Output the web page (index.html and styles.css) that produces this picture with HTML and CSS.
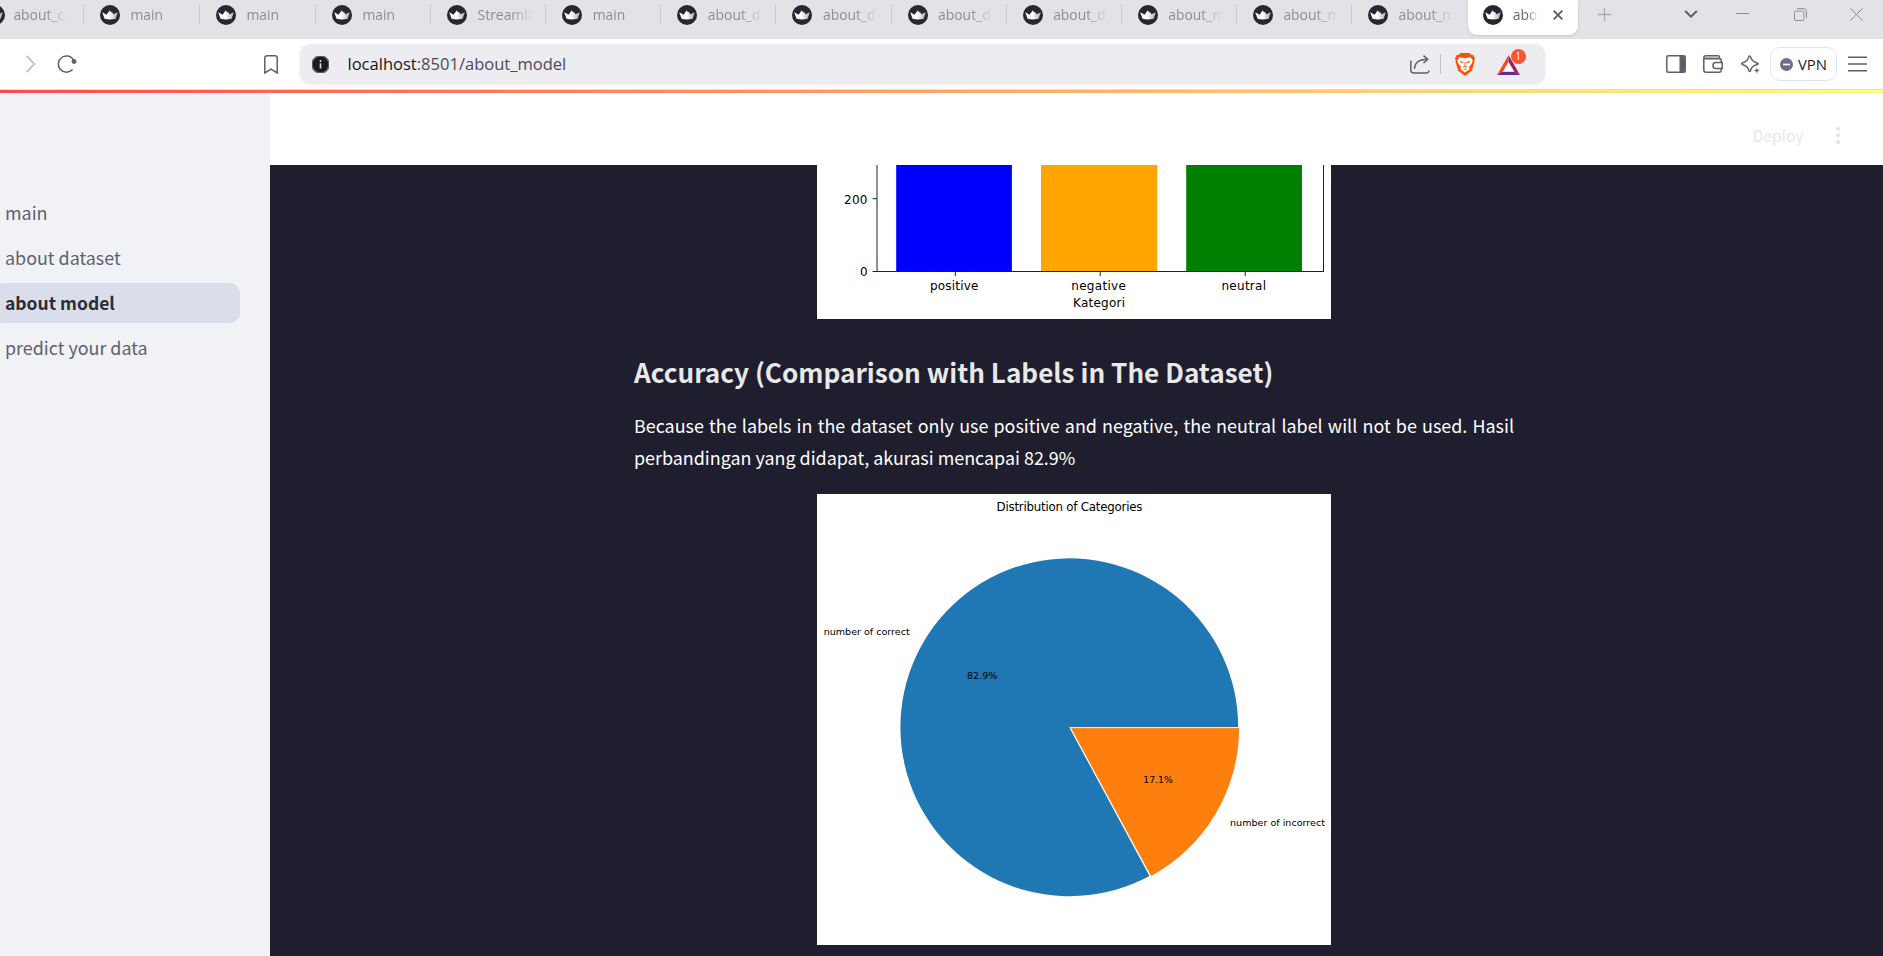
FILE: index.html
```html
<!DOCTYPE html>
<html lang="en">
<head>
<meta charset="utf-8">
<title>about_model</title>
<link rel="stylesheet" href="styles.css">
</head>
<body>
<svg class="defs" width="0" height="0">
  <linearGradient id="crown-fill" x1="0" x2="1"><stop offset=".45" stop-color="#fff"/><stop offset="1" stop-color="#aaa"/></linearGradient>
  <symbol id="crown" viewBox="0 0 20 20">
    <circle cx="10" cy="10" r="10" fill="#262730"/>
    <path d="M2.2 7.2 6.6 9.8 9.8 5.2l1.2 2.4 1-.8 1.3 2.4 4.6-2-2.3 6.6q-5.6 1.6-11 0z" fill="url(#crown-fill)"/>
  </symbol>
</svg>

<div class="tabs">
  <div class="tab tab-cut"><svg class="fav"><use href="#crown"/></svg><span class="title">about_ca</span></div>
  <div class="tab tab-wide"><svg class="fav"><use href="#crown"/></svg><span class="title">main</span></div>
  <div class="tab tab-wide"><svg class="fav"><use href="#crown"/></svg><span class="title">main</span></div>
  <div class="tab"><svg class="fav"><use href="#crown"/></svg><span class="title">main</span></div>
  <div class="tab"><svg class="fav"><use href="#crown"/></svg><span class="title">Streamlit</span></div>
  <div class="tab"><svg class="fav"><use href="#crown"/></svg><span class="title">main</span></div>
  <div class="tab"><svg class="fav"><use href="#crown"/></svg><span class="title">about_d</span></div>
  <div class="tab"><svg class="fav"><use href="#crown"/></svg><span class="title">about_d</span></div>
  <div class="tab"><svg class="fav"><use href="#crown"/></svg><span class="title">about_d</span></div>
  <div class="tab"><svg class="fav"><use href="#crown"/></svg><span class="title">about_d</span></div>
  <div class="tab"><svg class="fav"><use href="#crown"/></svg><span class="title">about_m</span></div>
  <div class="tab"><svg class="fav"><use href="#crown"/></svg><span class="title">about_m</span></div>
  <div class="tab"><svg class="fav"><use href="#crown"/></svg><span class="title">about_m</span></div>
  <div class="tab-active"><svg class="fav"><use href="#crown"/></svg><span class="title">abou</span>
    <svg class="close" viewBox="0 0 10 10"><path d="M.7.7l8.6 8.6M9.3.7.7 9.3"/></svg></div>
  <svg class="plus" viewBox="0 0 13 13"><path d="M6.5 0v13M0 6.5h13"/></svg>
  <div class="window">
    <svg width="14" height="8" viewBox="0 0 14 8"><path d="M1.2 1 7 6.6 12.800 1" stroke="#5a5c62" stroke-width="2"/></svg>
    <svg class="min" width="13" height="2" viewBox="0 0 13 2"><path d="M0 .5h13"/></svg>
    <svg width="13" height="13" viewBox="0 0 13 13"><rect x=".5" y="3" width="9.500" height="9.500" rx="1.500"/><path d="M3 .6h6.500q3 0 3 3v6.400"/></svg>
    <svg width="13" height="13" viewBox="0 0 13 13"><path d="M.3.300l12.400 12.400M12.700.3.3 12.700"/></svg>
  </div>
</div>

<div class="toolbar">
  <svg class="fwd" viewBox="0 0 9 18"><path d="M.6.7 8.300 9 .6 17.300"/></svg>
  <svg class="reload" viewBox="0 0 20 20"><path d="M16.600 6A8.200 8.200 0 1 0 15.600 15.600"/><circle cx="17" cy="7.500" r="2.400" fill="#5e6067" stroke="none"/></svg>
  <svg class="bookmark" viewBox="0 0 14 19"><path d="M3 .8h8q2.200 0 2.200 2.200v15L7 14.200.8 18V3Q.8.800 3 .8z"/></svg>
  <div class="address">
    <svg class="info" viewBox="0 0 17 17"><circle cx="8.500" cy="8.500" r="8.500" fill="#1a1a21"/><path d="M8.500 4v1.900M8.500 7.300V12.500" stroke="#ddd" stroke-width="1.600"/></svg>
    <span class="url"><b>localhost</b>:8501/about_model</span>
    <svg class="share" viewBox="0 0 20 19"><path d="M.8 5.500v9.500q0 3 3 3h12.400q2.500 0 2.800-2.500M4.500 14q.3-9.500 13-9.700M13.500.6l4.200 3.700-4.200 3.900"/></svg>
    <i class="rule"></i>
    <svg class="brave" viewBox="0 0 20 23"><path d="M5.500 0h9l2 2 1.500-.2L20 5l-.7 2 .3 1-2.600 9.500L10 23l-7-5.500L.4 8l.3-1L0 5l2-3.200 1.500.2z" fill="#fb5008"/><path d="M4.500 4.200 10 5.200l5.500-1 2.200 3-.7 3-3 3.600.6 2.400L10 19.500 5.400 16.200l.6-2.400-3-3.600-.7-3z" fill="#fff"/><path d="M5.200 8.500l3 .9-.6.600zM14.800 8.500l-3 .9.6.6zM10 9v4M7.800 14.200l2.200-.9 2.200.9M8.500 16.800l1.500-1 1.500 1" fill="none" stroke="#fb5008" stroke-width=".9"/></svg>
    <div class="rewards">
      <svg viewBox="0 0 23 20"><path d="M11.500 0 0 20 6.500 16.500 11.500 7.500z" fill="#ff4724"/><path d="M11.500 0 23 20 17 16.500 11.500 7.500z" fill="#9e1f63"/><path d="M0 20h23l-6-3.700H6.200z" fill="#662d91"/><path d="M11.500 7 17.300 16.700H5.700z" fill="#fff"/></svg>
      <span class="badge">1</span>
    </div>
  </div>
  <div class="actions">
    <svg width="20" height="18" viewBox="0 0 20 18"><rect x=".8" y=".8" width="18.400" height="16.400" rx="1.500"/><path d="M13.500 1H18q1 0 1 1v14q0 1-1 1h-4.500z" fill="#5e6067" stroke="none"/></svg>
    <svg width="20" height="18" viewBox="0 0 20 18"><path d="M18.200 7V5q0-1.300-1.500-1.300H1.500M16.500 3.500V2.300Q16.500.8 15 .8H3Q.8.800.8 3v12Q.8 17.200 3 17.200h13.500q1.700 0 1.700-1.700v-1.200M12.500 7.500h6.700v6h-6.700q-2.500 0-2.500-3t2.500-3z"/><path d="M2 2h13.500" stroke="#a5a6aa"/></svg>
    <svg class="leo" width="20" height="19" viewBox="0 0 20 19"><path d="M8.700.9q.7 0 1 1.300 1 4.200 5.800 5.500 1.700.5 1.700 1t-1.700 1q-4.800 1.300-5.800 5.500-.3 1.300-1 1.300t-1-1.300Q6.700 11 1.900 9.700q-1.200-.4-1.200-1t1.200-1Q6.700 6.400 7.700 2.200q.3-1.300 1-1.300z"/><path d="m15.800 11.800 1 2.700 2.700 1-2.700 1-1 2.700-1-2.700-2.700-1 2.700-1z" fill="#5e6067" stroke="#fff" stroke-width=".6"/></svg>
    <div class="vpn"><svg width="13" height="13" viewBox="0 0 13 13"><circle cx="6.500" cy="6.500" r="6.500" fill="#6b6f8d" stroke="none"/><path d="M3 6.500h7" stroke="#fff" stroke-width="1.600"/></svg><span>VPN</span></div>
    <svg width="19" height="16" viewBox="0 0 19 16"><path d="M0 1.200h19M0 8h19M0 14.800h19"/></svg>
  </div>
</div>
<div class="decoration"></div>

<div class="app">
  <nav class="sidebar">
    <a>main</a>
    <a>about dataset</a>
    <a class="current">about model</a>
    <a>predict your data</a>
  </nav>
  <div class="main">
    <header class="header"><span>Deploy</span>
      <svg width="4" height="17" viewBox="0 0 4 17"><circle cx="2" cy="2" r="2"/><circle cx="2" cy="8.500" r="2"/><circle cx="2" cy="15" r="2"/></svg>
    </header>
    <main class="content">
      <svg class="chart" width="514" height="154" viewBox="817 165 514 154">
        <rect x="817" y="165" width="514" height="154" fill="#fff"/>
        <rect x="896.200" y="165" width="115.700" height="106.500" fill="#00f"/>
        <rect x="1041" y="165" width="116.200" height="106.500" fill="orange"/>
        <rect x="1186.200" y="165" width="115.800" height="106.500" fill="green"/>
        <path d="M877 165v106.500M1323.500 165v107M872.500 271.500h451M872.500 198.700h4.500M955.300 271.500v4.500M1100.200 271.500v4.500M1245.200 271.500v4.500" stroke="#222" fill="none"/>
        <g font-size="12">
          <text x="844" y="203.600" textLength="23.500">200</text>
          <text x="860" y="275.600">0</text>
          <text x="930" y="290" textLength="48.500">positive</text>
          <text x="1071.300" y="290" textLength="54.500">negative</text>
          <text x="1221.500" y="290" textLength="44.500">neutral</text>
          <text x="1073" y="307" textLength="52">Kategori</text>
        </g>
      </svg>
      <h3>Accuracy (Comparison with Labels in The Dataset)</h3>
      <p>Because the labels in the dataset only use positive and negative, the neutral label will not be used. Hasil perbandingan yang didapat, akurasi mencapai 82.9%</p>
      <svg class="chart" width="514" height="451" viewBox="817 494 514 451">
        <rect x="817" y="494" width="514" height="451" fill="#fff"/>
        <path d="M1069.200 727.200H1238.200A168.900 168.900 0 1 0 1149.500 875.900Z" fill="#1f77b4"/>
        <path d="M1070.300 727.600H1239.600A169.300 169.300 0 0 1 1150.900 876.500Z" fill="#ff7f0e" stroke="#fff" stroke-width=".8"/>
        <text x="996.500" y="510.500" font-size="11.800" textLength="146">Distribution of Categories</text>
        <g font-size="9.400" lengthAdjust="spacingAndGlyphs">
          <text x="823.700" y="635.300" textLength="86" lengthAdjust="spacingAndGlyphs">number of correct</text>
          <text x="967" y="678.500" textLength="30.500" lengthAdjust="spacingAndGlyphs">82.9%</text>
          <text x="1143.300" y="782.800" textLength="29.500" lengthAdjust="spacingAndGlyphs">17.1%</text>
          <text x="1230" y="825.700" textLength="95" lengthAdjust="spacingAndGlyphs">number of incorrect</text>
        </g>
      </svg>
    </main>
  </div>
</div>
</body>
</html>
```
FILE: styles.css
```css
* { box-sizing: border-box; }
body { margin: 0; width: 1883px; height: 956px; overflow: hidden; display: flex; flex-direction: column; background: #fff; font-family: "Noto Sans CJK SC", "Noto Sans", sans-serif; }
svg { display: block; flex: none; }
.defs { position: absolute; }

/* Tab strip */
.tabs { height: 39px; flex: none; display: flex; background: #e3e2e7; font-family: "Open Sans", "Noto Sans", sans-serif; font-size: 13.9px; color: #8e8e94; }
.tab { width: 115.120px; height: 30px; flex: none; display: flex; align-items: center; padding-left: 17px; position: relative; }
.tab::before { content: ""; position: absolute; left: 0; top: 4px; width: 1px; height: 20px; background: #cbcad0; }
.tab-cut { margin-left: -32.120px; }
.tab-wide { width: 116px; }
.fav { width: 20px; height: 20px; }
.title { width: 55px; margin-left: 10.500px; overflow: hidden; white-space: nowrap; line-height: 20px; -webkit-mask-image: linear-gradient(90deg, #000 60%, transparent); mask-image: linear-gradient(90deg, #000 60%, transparent); }
.tab-cut .title { margin-left: 8.500px; }
.tab-active { width: 110px; height: 35px; flex: none; margin-left: 1.600px; padding: 0 15px 5px; display: flex; align-items: center; background: #fff; border-radius: 0 0 9px 9px; box-shadow: 0 1px 3px #0002; color: #66666c; }
.tab-active .title { width: 25px; margin-left: 10px; }
.close { width: 10px; height: 10px; margin-left: 15px; stroke: #5a5c62; stroke-width: 1.8; }
.plus { width: 13px; height: 13px; margin: 8px 0 0 20px; stroke: #a9a9ae; stroke-width: 1.3; }
.window { height: 28px; margin-left: auto; padding-right: 20.500px; display: flex; align-items: center; gap: 43px; fill: none; stroke: #8d8d92; stroke-width: 1; }
.window svg { fill: none; }
.window .min { margin: 0 1.500px 0 -5px; }

/* Toolbar */
.toolbar { height: 51px; flex: none; display: flex; align-items: center; border-bottom: 1px solid #dddce1; fill: none; stroke: #5e6067; stroke-width: 1.5; }
.fwd { width: 9px; height: 18px; margin-left: 26px; stroke: #b5b5b9; }
.reload { width: 20px; height: 20px; margin-left: 22px; }
.bookmark { width: 14px; height: 19px; margin-left: 187px; }
.address { width: 1245px; height: 40px; margin-left: 22px; padding-left: 12px; display: flex; align-items: center; background: #edecf1; border-radius: 10px; box-shadow: 0 1px 5px #0001; }
.info { width: 17px; height: 17px; margin-top: 1px; }
.url { margin: -1px 0 0 18.500px; width: 230px; font: 16.55px "Open Sans", "Noto Sans", sans-serif; color: #4b4b52; white-space: nowrap; }
.url b { font-weight: 400; color: #17171c; }
.share { width: 20px; height: 19px; margin-left: 832.500px; }
.rule { width: 1px; height: 20px; margin-left: 10px; background: #c4c4ca; }
.brave { width: 20px; height: 23px; margin-left: 13.500px; stroke: none; }
.rewards { position: relative; margin: 1px 0 0 22px; stroke: none; }
.rewards svg { width: 23px; height: 20px; }
.badge { position: absolute; left: 14px; top: -6px; width: 15px; height: 15px; border-radius: 50%; background: #ff5430; color: #fff; font: 10px/15px "Open Sans", sans-serif; text-align: center; }
.actions { margin-left: 120.500px; display: flex; align-items: center; gap: 17px; }
.leo { margin-left: 1px; }
.vpn { width: 67px; height: 34px; margin: 0 -6px 0 -7.500px; display: flex; align-items: center; justify-content: center; gap: 5px; border: 1px solid #e3e3e8; border-radius: 10px; font: 14.9px "Open Sans", sans-serif; color: #1d1d24; }

.decoration { height: 3px; flex: none; background: linear-gradient(90deg, #ff4b4b, #fffd80); }

/* App */
.app { flex: 1; min-height: 0; display: flex; }
.sidebar { width: 270px; flex: none; padding: 100px 30px 0 0; display: flex; flex-direction: column; gap: 5px; background: #f0f2f6; }
.sidebar a { height: 40px; margin-left: -5px; padding: 0 0 1px 10px; line-height: 39px; font-size: 17.9px; color: #5e606e; }
.sidebar .current { font-size: 17.5px; font-weight: 700; color: #2b2c38; background: #dadeea; border-radius: 10px; }
.main { flex: 1; display: flex; flex-direction: column; }
.header { height: 72px; flex: none; display: flex; align-items: center; justify-content: flex-end; gap: 32px; padding: 12px 43.500px 0 0; background: #fff; color: #e8e8ea; font-size: 15.6px; line-height: 24px; fill: #e3e3e6; }
.header span { margin-top: -1px; }
.content { flex: 1; display: flex; flex-direction: column; align-items: center; background: #1e1e2e; }
.chart { margin-right: 5px; font-family: "DejaVu Sans", sans-serif; }
h3 { width: 880px; margin: 31.500px 5px 16.500px 0; font-size: 26.14px; line-height: 42px; font-weight: 700; color: #e8e8e8; white-space: nowrap; }
p { width: 880px; margin: 0 5px 21px 0; font-size: 17.92px; line-height: 32px; color: #fff; text-align: justify; }
```
